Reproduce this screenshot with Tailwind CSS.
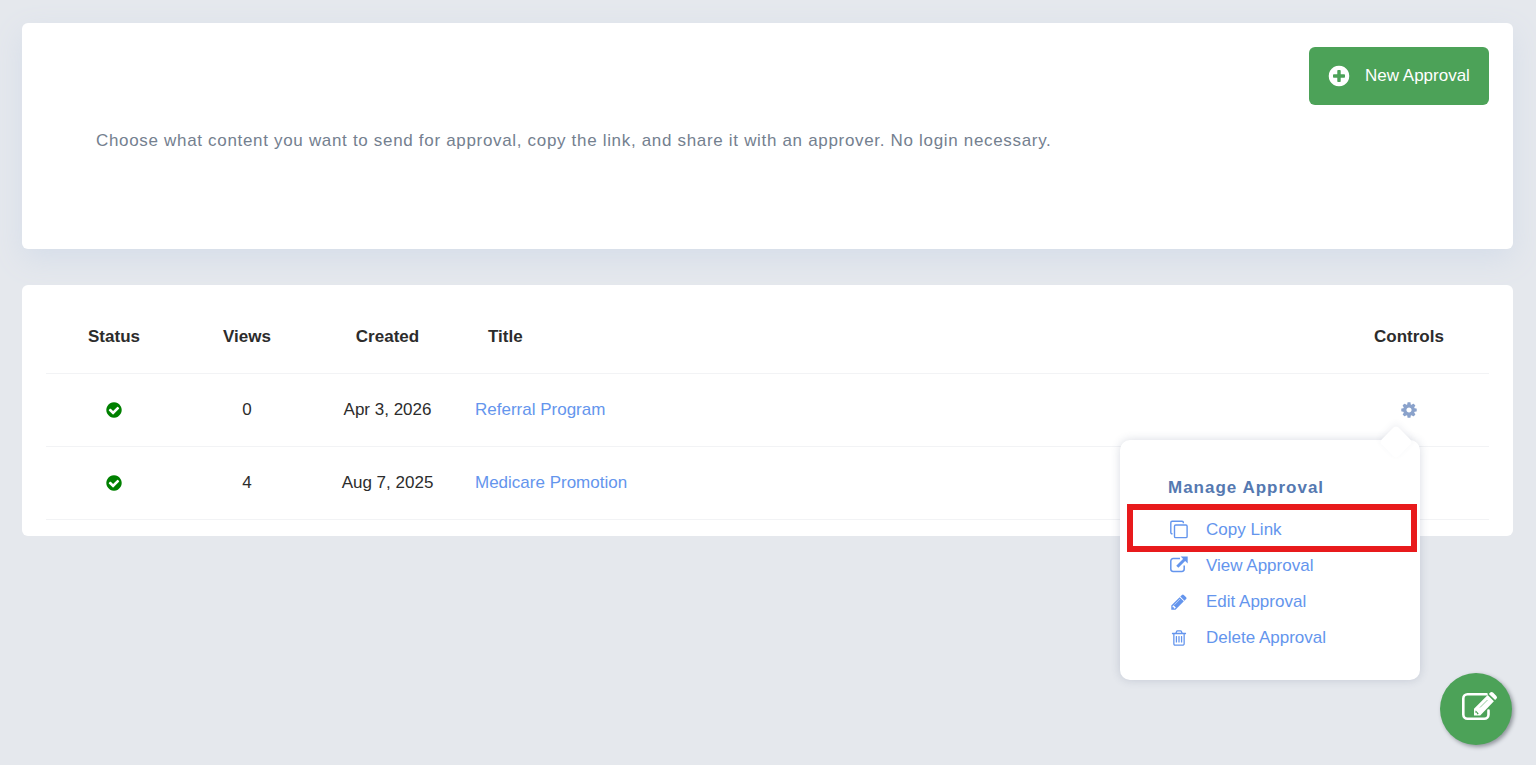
<!DOCTYPE html>
<html lang="en">
<head>
  <meta charset="UTF-8" />
  <meta name="viewport" content="width=device-width, initial-scale=1.0" />
  <title>Approvals</title>
  <script src="https://cdn.jsdelivr.net/npm/@tailwindcss/browser@4"></script>
</head>
<body class="min-h-screen bg-[#e5e8ed] py-[23px] pr-[23px] pl-[22px] font-['Liberation_Sans',Arial,sans-serif] text-[17px] leading-6 text-[#2c2c2c]">

  <!-- icons -->
  <svg class="hidden">
    <symbol id="check" viewBox="0 0 1792 1792"><path d="M1412 734q0-28-18-46l-91-90q-19-19-45-19t-45 19l-408 407-226-226q-19-19-45-19t-45 19l-91 90q-18 18-18 46 0 27 18 45l362 362q19 19 45 19 27 0 46-19l543-543q18-18 18-45zm252 162q0 209-103 385.5t-279.5 279.5-385.5 103-385.5-103-279.5-279.5-103-385.5 103-385.5 279.5-279.5 385.5-103 385.5 103 279.5 279.5 103 385.5z" /></symbol>
  </svg>

  <main>
    <section class="flex flex-col rounded-md bg-white px-6 pt-6 pb-24 shadow-[0_10px_30px_#d5dde9]">
      <button class="flex h-[58px] w-[180px] items-center gap-[14px] self-end rounded-md bg-[#4ca258] pl-[18px] text-white">
        <svg class="size-6 fill-current" viewBox="0 0 1792 1792"><path d="M1344 960v-128q0-26-19-45t-45-19h-256v-256q0-26-19-45t-45-19h-128q-26 0-45 19t-19 45v256h-256q-26 0-45 19t-19 45v128q0 26 19 45t45 19h256v256q0 26 19 45t45 19h128q26 0 45-19t19-45v-256h256q26 0 45-19t19-45zm320-64q0 209-103 385.5t-279.5 279.5-385.5 103-385.5-103-279.5-279.5-103-385.5 103-385.5 279.5-279.5 385.5-103 385.5 103 279.5 279.5 103 385.5z" /></svg>
        <span>New Approval</span>
      </button>
      <p class="mt-6 px-[50px] tracking-[0.04em] text-[#74808f]">Choose what content you want to send for approval, copy the link, and share it with an approver. No login necessary.</p>
    </section>

    <section class="mt-9 rounded-md bg-white px-6 py-4">
      <table class="w-full table-fixed text-center">
        <thead>
          <tr class="h-[72px] border-b border-[#f2f3f5]">
            <th class="w-[136px]">Status</th>
            <th class="w-[130px]">Views</th>
            <th class="w-[151px]">Created</th>
            <th class="pl-[25px] text-left">Title</th>
            <th class="w-40">Controls</th>
          </tr>
        </thead>
        <tbody>
          <tr class="h-[73px] border-b border-[#f2f3f5]">
            <td><svg class="mx-auto size-[18px] fill-[#008000]" role="img" aria-label="Approved"><use href="#check" /></svg></td>
            <td>0</td>
            <td>Apr 3, 2026</td>
            <td class="pl-3 text-left"><a href="#" class="text-[#6495ed]">Referral Program</a></td>
            <td>
              <div class="relative mx-auto size-[18px]">
                <button class="block" aria-label="Manage approval" aria-expanded="true">
                  <svg class="size-[18px] fill-[#8aa2cb]" viewBox="0 0 1792 1792"><path d="M1152 896q0-106-75-181t-181-75-181 75-75 181 75 181 181 75 181-75 75-181zm512-109v222q0 12-8 23t-20 13l-185 28q-19 54-39 91 35 50 107 138 10 12 10 25t-9 23q-27 37-99 108t-94 71q-12 0-26-9l-138-108q-44 23-91 38-16 136-29 186-7 28-36 28h-222q-14 0-24.5-8.5t-11.5-21.5l-28-184q-49-16-90-37l-141 107q-10 9-25 9-14 0-25-11-126-114-165-168-7-10-7-23 0-12 8-23 15-21 51-66.5t54-70.5q-27-50-41-99l-183-27q-13-2-21-12.5t-8-23.5v-222q0-12 8-23t19-13l186-28q14-46 39-92-40-57-107-138-10-12-10-24 0-10 9-23 26-36 98.5-107.5t94.5-71.5q13 0 26 10l138 107q44-23 91-38 16-136 29-186 7-28 36-28h222q14 0 24.5 8.5t11.5 21.5l28 184q49 16 90 37l142-107q9-9 24-9 13 0 25 10 129 119 165 170 7 8 7 22 0 12-8 23-15 21-51 66.5t-54 70.5q26 50 41 98l183 28q13 2 21 12.5t8 23.5z" /></svg>
                </button>

                <!-- gear menu -->
                <div class="absolute top-[39px] -right-[2px] z-10 w-[300px] rounded-[10px] bg-white px-12 py-9 pb-6 text-left shadow-[0_0_10px_rgba(60,75,110,0.2)]">
                  <span class="absolute -top-[10px] right-3 size-6 rotate-45 rounded-[4px] bg-white shadow-[-2px_-2px_6px_rgba(60,75,110,0.08)]"></span>
                  <h3 class="font-bold tracking-[1px] text-[#5579b1]">Manage Approval</h3>
                  <ul class="mt-3 text-[#6495ed]">
                    <li class="relative h-9">
                      <a href="#" class="flex h-9 items-center gap-4">
                        <svg class="size-[22px]" viewBox="0 0 22 22" fill="none" stroke="currentColor" stroke-width="1.4"><rect x="6.5" y="6" width="12.6" height="12.6" rx="1.2" /><path d="M4.5 14.8h-.3a1.4 1.4 0 0 1-1.4-1.4V3.7a1.4 1.4 0 0 1 1.4-1.4h9.8a1.4 1.4 0 0 1 1.4 1.4v.5" /></svg>
                        Copy Link
                      </a>
                      <span class="pointer-events-none absolute -inset-x-[41px] -top-2 h-12 w-[290px] border-6 border-[#e81a1c]"></span>
                    </li>
                    <li>
                      <a href="#" class="flex h-9 items-center gap-4">
                        <svg class="size-[22px]" viewBox="0 0 22 22" fill="none" stroke="currentColor" stroke-width="1.5"><path d="M12 3.5H5.2a2.4 2.4 0 0 0-2.4 2.4v8.200a2.4 2.4 0 0 0 2.4 2.4h8.6a2.4 2.4 0 0 0 2.4-2.400v-3.600" /><path d="M9.300 11.700l7.500-7.500" stroke-width="3" /><path d="M12.700 1.600h7v7z" fill="currentColor" stroke="none" /></svg>
                        View Approval
                      </a>
                    </li>
                    <li>
                      <a href="#" class="flex h-9 items-center gap-4">
                        <svg class="mx-[2px] size-[18px] fill-current" viewBox="0 0 1792 1792"><path d="M491 1536l91-91-235-235-91 91v107h128v128h107zm523-928q0-22-22-22-10 0-17 7l-542 542q-7 7-7 17 0 22 22 22 10 0 17-7l542-542q7-7 7-17zm-54-192l416 416-832 832h-416v-416zm683 96q0 53-37 90l-166 166-416-416 166-165q36-38 90-38 53 0 91 38l235 234q37 39 37 91z" /></svg>
                        Edit Approval
                      </a>
                    </li>
                    <li>
                      <a href="#" class="flex h-9 items-center gap-4">
                        <svg class="mx-[2px] size-[18px] fill-current" viewBox="0 0 1792 1792"><path d="M704 736v576q0 14-9 23t-23 9h-64q-14 0-23-9t-9-23v-576q0-14 9-23t23-9h64q14 0 23 9t9 23zm256 0v576q0 14-9 23t-23 9h-64q-14 0-23-9t-9-23v-576q0-14 9-23t23-9h64q14 0 23 9t9 23zm256 0v576q0 14-9 23t-23 9h-64q-14 0-23-9t-9-23v-576q0-14 9-23t23-9h64q14 0 23 9t9 23zm128 724v-948h-896v948q0 22 7 40.5t14.5 27 10.5 8.5h832q3 0 10.5-8.5t14.5-27 7-40.5zm-672-1076h448l-48-117q-7-9-17-11h-317q-10 2-17 11zm928 32v64q0 14-9 23t-23 9h-96v948q0 83-47 143.5t-113 60.5h-832q-66 0-113-58.5t-47-141.5v-952h-96q-14 0-23-9t-9-23v-64q0-14 9-23t23-9h309l70-167q15-37 54-63t79-26h320q40 0 79 26t54 63l70 167h309q14 0 23 9t9 23z" /></svg>
                        Delete Approval
                      </a>
                    </li>
                  </ul>
                </div>
              </div>
            </td>
          </tr>
          <tr class="h-[73px] border-b border-[#f2f3f5]">
            <td><svg class="mx-auto size-[18px] fill-[#008000]" role="img" aria-label="Approved"><use href="#check" /></svg></td>
            <td>4</td>
            <td>Aug 7, 2025</td>
            <td class="pl-3 text-left"><a href="#" class="text-[#6495ed]">Medicare Promotion</a></td>
            <td></td>
          </tr>
        </tbody>
      </table>
    </section>
  </main>

  <button class="fixed right-6 bottom-5 flex size-[72px] items-center justify-center rounded-full bg-[#4ca258] text-white shadow-[2px_2px_4px_#8f949b]" aria-label="Write">
    <svg class="size-[72px]" viewBox="0 0 72 72" fill="none">
      <path d="M46.5 21.2H27.5a4.2 4.2 0 0 0-4.2 4.2v16.2a4.2 4.2 0 0 0 4.2 4.2h16.8a4.2 4.2 0 0 0 4.2-4.2v-4" stroke="currentColor" stroke-width="2.6" stroke-linecap="round" />
      <path d="M34 42.5v-6.700L47.700 22.100l6.200 6.200L40.200 42.500zM48.900 20.900l1.300-1.300a2 2 0 0 1 2.800 0l3.400 3.400a2 2 0 0 1 0 2.800l-1.300 1.300z" fill="currentColor" />
      <path d="M35.800 37.600l2.900 2.900-.8.700h-1v-1.400h-1.500v-1.200z" fill="#4ca258" />
      <path d="M40 34.500l7.500-7.500" stroke="#4ca258" stroke-width=".6" />
    </svg>
  </button>

</body>
</html>
